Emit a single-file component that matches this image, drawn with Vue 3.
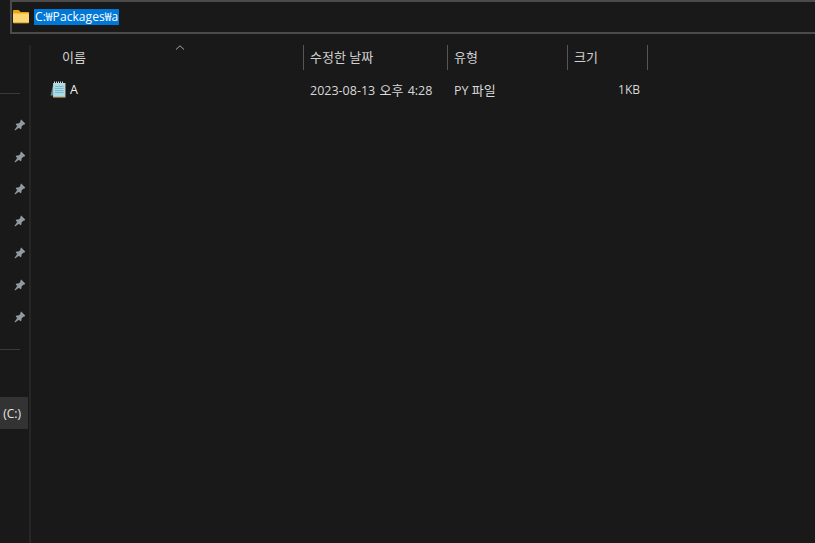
<template>
  <div class="explorer">
    <div class="address-bar">
      <svg class="folder" width="18" height="15" viewBox="0 0 18 15">
        <path d="M1 2.500C1 1.400 1.600 1 2.400 1h4.200l2 2H16c.6 0 1 .4 1 1v1.500H1z" fill="#e8a80c" />
        <path d="M1 4.500h16V13c0 .8-.5 1.300-1.200 1.300H2.200C1.500 14.300 1 13.800 1 13z" fill="#fcd774" />
        <path d="M1 13.500h16" stroke="#e5b03c" stroke-width="1" />
      </svg>
      <span class="path">C:₩Packages₩a</span>
    </div>

    <div class="body">
      <aside class="sidebar">
        <div class="divider first"></div>
        <div class="pins">
          <div v-for="n in 7" :key="n" class="pin-row">
            <svg width="12" height="12" viewBox="0 0 12 12">
              <path d="M7.200 .6l4.200 4.200-1 .8-1.100.1-1.700 1.800-.2 2-1 .8-1.500-1.500L1 11.500l-.5-.5 2.700-3.900-1.500-1.500.8-1 2-.2L6.300 3l.1-1.300z" fill="#8f9aa3" />
            </svg>
          </div>
        </div>
        <div class="divider second"></div>
        <div class="drive">(C:)</div>
      </aside>

      <main class="files">
        <div class="head">
          <div class="col name">
            <svg class="sort" width="10" height="5" viewBox="0 0 10 5">
              <path d="M1 4.500L5 .8l4 3.700" fill="none" stroke="#a6a6a6" stroke-width="1" />
            </svg>
            이름
          </div>
          <div class="col date">수정한 날짜</div>
          <div class="col type">유형</div>
          <div class="col size">크기</div>
        </div>
        <div class="row">
          <div class="cell name">
            <svg width="16" height="17" viewBox="0 0 16 17">
              <path d="M3.500 2L.5 14.500H4z" fill="#5f8d9a" />
              <rect x="3" y="2" width="12.500" height="14.500" fill="#c9b99b" />
              <rect x="3.500" y="2" width="11.500" height="13" fill="#a9dbe8" />
              <path d="M5 5.500h8.500M5 7.500h8.500M5 9.500h8.500M5 11.500h8.500" stroke="#7fb8c9" stroke-width="1" />
              <path d="M4.500 .5v2M6.500 .5v2M8.500 .5v2M10.500 .5v2M12.500 .5v2" stroke="#d8d8d8" stroke-width="1" />
            </svg>
            <span>A</span>
          </div>
          <div class="cell date">2023-08-13 <span class="ko">오후</span> 4:28</div>
          <div class="cell type">PY <span class="ko">파일</span></div>
          <div class="cell size">1KB</div>
        </div>
      </main>
    </div>
  </div>
</template>

<script setup>
</script>

<style>
html, body {
  margin: 0;
  background: #191919;
}
</style>

<style scoped>
.explorer {
  width: 815px;
  height: 543px;
  overflow: hidden;
  background: #191919;
  color: #e6e6e6;
  font-family: "Open Sans", "Noto Sans CJK KR", sans-serif;
  font-size: 12px;
  display: flex;
  flex-direction: column;
}

.address-bar {
  height: 34px;
  box-sizing: border-box;
  margin-left: 10px;
  border: 2px solid #4b4b4b;
  border-right: none;
  display: flex;
  align-items: center;
  gap: 4px;
}

.folder {
  margin-bottom: 2px;
}

.path {
  background: #0078d7;
  color: #fff;
  line-height: 16px;
  padding: 0 1px;
  letter-spacing: 0.08px;
}

.body {
  flex: 1;
  display: flex;
  padding-top: 11px;
}

.sidebar {
  width: 29px;
  border-right: 2px solid #262626;
  flex-shrink: 0;
}

.divider {
  height: 1px;
  width: 20px;
  background: #3a3a3a;
}

.divider.first {
  margin-top: 48px;
}

.pins {
  padding-top: 15px;
  padding-bottom: 16px;
}

.pin-row {
  height: 32px;
  display: flex;
  align-items: center;
  justify-content: flex-end;
  padding-right: 3px;
}

.drive {
  margin-top: 47px;
  height: 32px;
  width: 28px;
  background: #333;
  display: flex;
  align-items: center;
  justify-content: flex-end;
  padding-right: 7px;
  box-sizing: border-box;
}

.files {
  flex: 1;
  padding-left: 2px;
}

.head {
  display: flex;
  height: 25px;
  color: #d0d0d0;
  font-size: 13px;
}

.col {
  box-sizing: border-box;
  padding-left: 6px;
  line-height: 25px;
  border-right: 1px solid #555;
  position: relative;
}

.col.name {
  width: 271px;
  padding-left: 29px;
}

.sort {
  position: absolute;
  left: 142px;
  top: 0;
}

.col.date {
  width: 144px;
}

.col.type {
  width: 120px;
}

.col.size {
  width: 80px;
}

.row {
  display: flex;
  margin-top: 8px;
  height: 22px;
  align-items: center;
  color: #d8d8d8;
  font-size: 12.5px;
}

.ko {
  font-size: 13px;
}

.cell {
  box-sizing: border-box;
  padding-left: 6px;
}

.cell.name {
  width: 271px;
  padding-left: 17px;
  display: flex;
  align-items: center;
  gap: 4px;
  color: #f0f0f0;
}

.cell.date {
  width: 144px;
  word-spacing: 1px;
}

.cell.type {
  width: 120px;
}

.cell.size {
  width: 80px;
  text-align: right;
  padding-right: 8px;
  font-size: 12px;
}
</style>
